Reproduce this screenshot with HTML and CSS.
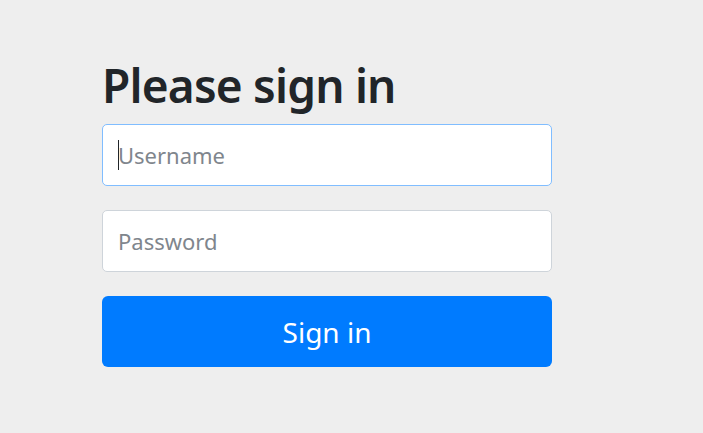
FILE: index.html
```html
<!DOCTYPE html>
<html lang="en">
<head>
<meta charset="utf-8">
<title>Please sign in</title>
<link rel="stylesheet" href="styles.css">
</head>
<body>
<div class="container">
  <form class="form-signin">
    <h2 class="form-signin-heading">Please sign in</h2>
    <div class="field">
      <input class="form-control focused" type="text" placeholder="Username">
      <span class="caret"></span>
    </div>
    <div class="field">
      <input class="form-control" type="password" placeholder="Password">
    </div>
    <button class="btn-primary" type="button">Sign in</button>
  </form>
</div>
</body>
</html>
```
FILE: styles.css
```css
html, body {
  margin: 0;
  padding: 0;
  background: #eeeeee;
  font-family: "Noto Sans", "Open Sans", sans-serif;
  color: #212529;
}
.container {
  padding: 57px 0 0 102px;
}
.form-signin {
  width: 450px;
  display: flex;
  flex-direction: column;
}
.form-signin-heading {
  margin: 0 0 11px 0;
  font-size: 46px;
  font-weight: 600;
  line-height: 56px;
  letter-spacing: -0.8px;
}
.field {
  position: relative;
  margin-bottom: 24px;
}
.form-control {
  box-sizing: border-box;
  width: 100%;
  height: 62px;
  padding: 0 15px;
  border: 1px solid #ced4da;
  border-radius: 5px;
  background: #fff;
  font-family: inherit;
  font-size: 22px;
  color: #495057;
  outline: none;
}
.form-control::placeholder {
  color: #7f868d;
}
.form-control.focused {
  border-color: #80bdff;
}
.caret {
  position: absolute;
  left: 16px;
  top: 16px;
  width: 1px;
  height: 30px;
  background: #212529;
}
.btn-primary {
  box-sizing: border-box;
  width: 100%;
  height: 71px;
  border: none;
  border-radius: 6px;
  background: #007bff;
  color: #fff;
  font-family: inherit;
  font-size: 28px;
  cursor: pointer;
}
```
